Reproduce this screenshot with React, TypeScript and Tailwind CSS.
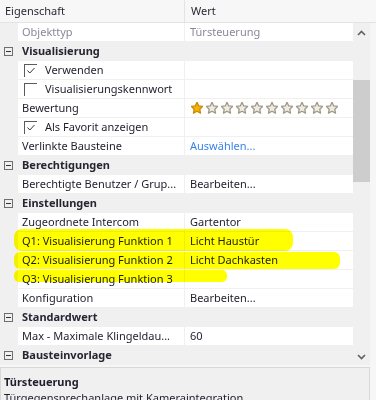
import React from 'react';

type Row =
  | { kind: 'cat'; label: string }
  | {
      kind: 'prop';
      label: string;
      value?: string;
      check?: boolean;
      disabled?: boolean;
      link?: boolean;
      stars?: number;
    };

const rows: Row[] = [
  { kind: 'prop', label: 'Objekttyp', value: 'Türsteuerung', disabled: true },
  { kind: 'cat', label: 'Visualisierung' },
  { kind: 'prop', label: 'Verwenden', check: true },
  { kind: 'prop', label: 'Visualisierungskennwort', check: false },
  { kind: 'prop', label: 'Bewertung', stars: 1 },
  { kind: 'prop', label: 'Als Favorit anzeigen', check: true },
  { kind: 'prop', label: 'Verlinkte Bausteine', value: 'Auswählen...', link: true },
  { kind: 'cat', label: 'Berechtigungen' },
  { kind: 'prop', label: 'Berechtigte Benutzer / Grup...', value: 'Bearbeiten...' },
  { kind: 'cat', label: 'Einstellungen' },
  { kind: 'prop', label: 'Zugeordnete Intercom', value: 'Gartentor' },
  { kind: 'prop', label: 'Q1: Visualisierung Funktion 1', value: 'Licht Haustür' },
  { kind: 'prop', label: 'Q2: Visualisierung Funktion 2', value: 'Licht Dachkasten' },
  { kind: 'prop', label: 'Q3: Visualisierung Funktion 3' },
  { kind: 'prop', label: 'Konfiguration', value: 'Bearbeiten...' },
  { kind: 'cat', label: 'Standardwert' },
  { kind: 'prop', label: 'Max - Maximale Klingeldau...', value: '60' },
  { kind: 'cat', label: 'Bausteinvorlage' },
];

const STAR = '6,0.3 7.7,3.95 11.71,4.45 8.76,7.2 9.53,11.15 6,9.2 2.47,11.15 3.24,7.2 0.29,4.45 4.3,3.95';

function Star({ on }: { on: boolean }) {
  return (
    <svg width="12" height="12" viewBox="0 0 12 12" className="shrink-0">
      <polygon
        points={STAR}
        fill={on ? '#f4b400' : '#eeebe4'}
        stroke={on ? '#c8890a' : '#a09886'}
        strokeWidth="1.3"
        strokeLinejoin="round"
      />
    </svg>
  );
}

function Checkbox({ checked }: { checked: boolean }) {
  return (
    <div className="ml-[2px] mr-[8px] h-[13px] w-[13px] shrink-0 border-l border-t border-[#5a5a5a] bg-white">
      {checked && (
        <svg width="12" height="12" viewBox="0 0 12 12">
          <polyline points="2.5,5.5 4.8,8 9.5,3" fill="none" stroke="#333" strokeWidth="1" />
        </svg>
      )}
    </div>
  );
}

function MinusBox() {
  return (
    <div className="ml-[4px] mr-[9px] flex h-[9px] w-[9px] shrink-0 items-center justify-center border border-[#6e6e6e]">
      <div className="h-px w-[5px] bg-[#333]" />
    </div>
  );
}

function PropRow({ row }: { row: Extract<Row, { kind: 'prop' }> }) {
  return (
    <div className="flex h-[19px] items-start">
      <div className="w-[18px] shrink-0" />
      <div className="flex h-[18px] w-[166px] shrink-0 items-center overflow-hidden whitespace-nowrap bg-white pl-[4px]">
        {row.check !== undefined && <Checkbox checked={row.check} />}
        <span className={row.disabled ? 'text-[#8c8799]' : ''}>{row.label}</span>
      </div>
      <div className="w-px shrink-0" />
      <div className="flex h-[18px] flex-1 items-center whitespace-nowrap bg-white pl-[5px]">
        {row.stars !== undefined ? (
          <div className="flex gap-[3px] pl-[1px]">
            {Array.from({ length: 10 }).map((_, i) => (
              <Star key={i} on={i < (row.stars ?? 0)} />
            ))}
          </div>
        ) : (
          <span className={row.disabled ? 'text-[#8c8799]' : row.link ? 'text-[#3b82e6]' : ''}>{row.value}</span>
        )}
      </div>
    </div>
  );
}

function CatRow({ label }: { label: string }) {
  return (
    <div className="flex h-[19px] items-center">
      <MinusBox />
      <span className="font-bold text-[#262633]">{label}</span>
    </div>
  );
}

function Chevron({ up }: { up: boolean }) {
  return (
    <svg width="9" height="6" viewBox="0 0 9 6">
      <polyline
        points={up ? '1,5 4.5,1.5 8,5' : '1,1 4.5,4.5 8,1'}
        fill="none"
        stroke="#606060"
        strokeWidth="1.6"
      />
    </svg>
  );
}

export default function App() {
  return (
    <div
      className="relative flex h-[400px] w-[376px] flex-col overflow-hidden bg-[#f6f6f6] text-[11px] text-[#1e1e2c]"
      style={{ fontFamily: '"Noto Sans", "Open Sans", sans-serif' }}
    >
      {/* column header */}
      <div className="flex h-[23px] shrink-0 items-center border-b border-[#e3e3e3] bg-[#f7f7f7]">
        <div className="w-[184px] shrink-0 pl-[5px] text-[#2a2a35]">Eigenschaft</div>
        <div className="h-full w-px bg-[#e3e3e3]" />
        <div className="pl-[6px] text-[#2a2a35]">Wert</div>
      </div>

      {/* grid body */}
      <div className="flex h-[342px] shrink-0">
        <div className="w-[353px] shrink-0 bg-[#f0f0f0]">
          {rows.map((r, i) =>
            r.kind === 'cat' ? <CatRow key={i} label={r.label} /> : <PropRow key={i} row={r} />
          )}
        </div>
        <div className="flex w-[17px] shrink-0 flex-col bg-[#f0f0f0]">
          <div className="flex h-[17px] items-center justify-center pt-[2px]">
            <Chevron up />
          </div>
          <div className="h-[40px]" />
          <div className="h-[102px] bg-[#cdcdcd]" />
          <div className="flex-1" />
          <div className="flex h-[17px] items-center justify-center">
            <Chevron up={false} />
          </div>
        </div>
      </div>

      {/* description panel */}
      <div className="mt-[2px] w-[370px] flex-1 border-l border-t border-r border-[#d8d8d8] bg-[#f0f0f0] px-[3px] pt-[6px]">
        <div className="font-bold leading-[16px] text-[#1e1e2c]">Türsteuerung</div>
        <div className="leading-[16px]">Türgegensprechanlage mit Kameraintegration</div>
      </div>

      {/* marker highlights */}
      <div className="pointer-events-none absolute left-[14px] top-[229px] h-[22px] w-[279px] rounded-[8px] bg-[#ffff00] mix-blend-multiply" />
      <div className="pointer-events-none absolute left-[14px] top-[252px] h-[17px] w-[326px] rounded-[6px] bg-[#ffff00] mix-blend-multiply" />
      <div className="pointer-events-none absolute left-[14px] top-[270px] h-[12px] w-[213px] rounded-[5px] bg-[#ffff00] mix-blend-multiply" />
    </div>
  );
}
